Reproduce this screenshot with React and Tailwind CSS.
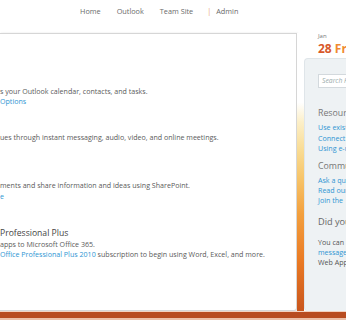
export default function App() {
  const font = { fontFamily: '"Open Sans", "Noto Sans", sans-serif' };
  return (
    <div className="w-[346px] h-[320px] overflow-hidden bg-white flex flex-col" style={font}>
      {/* top nav */}
      <nav className="h-[33px] shrink-0 flex items-start pt-[6px] text-[7.3px] leading-[10px] text-[#6a6a6a] whitespace-nowrap">
        <span className="ml-[80px]">Home</span>
        <span className="ml-[16px]">Outlook</span>
        <span className="ml-[16px]">Team Site</span>
        <span className="ml-[14px] text-[#e8a070]">|</span>
        <span className="ml-[5px]">Admin</span>
      </nav>

      <div className="flex h-[278px] shrink-0">
        {/* main panel */}
        <main className="w-[297px] shrink-0 bg-white border-t border-r border-b border-[#d6d6d6] rounded-br-[3px] shadow-[1px_0_2px_rgba(0,0,0,0.12)] pt-[52px] text-[7.1px] leading-[10px] text-[#5a5a5a] whitespace-nowrap overflow-hidden">
          <p>s your Outlook calendar, contacts, and tasks.</p>
          <p className="text-[#2e95d3]">Options</p>
          <p className="mt-[26px]">ues through instant messaging, audio, video, and online meetings.</p>
          <p className="mt-[38px]">ments and share information and ideas using SharePoint.</p>
          <p className="text-[#2e95d3] mt-[1px]">e</p>
          <p className="mt-[26px] text-[8.6px] leading-[12px] text-[#444]">Professional Plus</p>
          <p>apps to Microsoft Office 365.</p>
          <p>
            <span className="text-[#2e95d3]">Office Professional Plus 2010</span> subscription to begin using Word, Excel, and more.
          </p>
        </main>

        {/* orange strip */}
        <div className="w-[7px] shrink-0 bg-[linear-gradient(to_bottom,#ffffff_0%,#ffffff_25%,#fcefc8_32%,#f9dc94_42%,#f7c56a_52%,#f3a03e_65%,#ea7a24_82%,#c9561d_100%)]" />

        {/* right column */}
        <aside className="flex-1 min-w-0 flex flex-col overflow-hidden whitespace-nowrap">
          <div className="h-[25px] shrink-0 pl-[14px]">
            <p className="text-[6px] leading-[7px] text-[#777]">Jan</p>
            <p className="mt-[3px] text-[12px] leading-[12px] font-bold">
              <span className="text-[#d8582a]">28</span> <span className="text-[#f08a30]">Friday</span>
            </p>
          </div>
          <div className="flex-1 bg-[#eef2f4] border-l border-t border-[#dfe5e9] rounded-tl-[4px] rounded-bl-[4px] pl-[13px] pt-[15px]">
            <div className="h-[14px] w-[60px] bg-white border border-[#d3d9dd] pl-[3px] text-[6.8px] leading-[12px] italic text-[#9aa]">
              Search Help
            </div>
            <p className="mt-[20px] text-[8.8px] leading-[11px] text-[#777]">Resources</p>
            <div className="mt-[3px] text-[7.1px] leading-[10.5px] text-[#2e95d3]">
              <p>Use existing</p>
              <p>Connect</p>
              <p>Using e-mail</p>
            </div>
            <p className="mt-[7px] text-[8.8px] leading-[11px] text-[#777]">Community</p>
            <div className="mt-[3px] text-[7.1px] leading-[10px] text-[#2e95d3]">
              <p>Ask a question</p>
              <p>Read our</p>
              <p>Join the</p>
            </div>
            <p className="mt-[11px] text-[9.2px] leading-[12px] text-[#666]">Did you know</p>
            <div className="mt-[9px] text-[7.1px] leading-[10px] text-[#555]">
              <p>You can</p>
              <p className="text-[#2e95d3]">message</p>
              <p>Web App</p>
            </div>
          </div>
        </aside>
      </div>

      {/* bottom bar */}
      <div className="h-[1px] shrink-0 bg-[#f3d2c0]" />
      <div className="h-[6px] shrink-0 bg-[#b84c20]" />
      <div className="flex-1 bg-[#ecc0a8]" />
    </div>
  );
}
